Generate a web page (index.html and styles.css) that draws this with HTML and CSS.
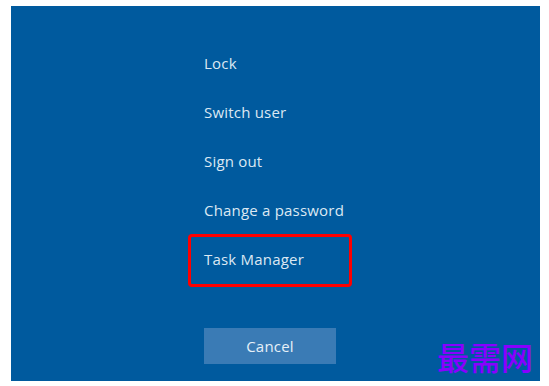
FILE: index.html
```html
<!DOCTYPE html>
<html>
<head>
<meta charset="utf-8">
<link rel="stylesheet" href="styles.css">
</head>
<body>
<div class="screen">
  <ul class="menu">
    <li class="item">Lock</li>
    <li class="item">Switch user</li>
    <li class="item">Sign out</li>
    <li class="item">Change a password</li>
    <li class="item highlighted">Task Manager</li>
  </ul>
  <button class="cancel">Cancel</button>
  <div class="watermark">最需网</div>
</div>
</body>
</html>
```
FILE: styles.css
```css
html, body {
  margin: 0;
  padding: 0;
  background: #ffffff;
}
body {
  padding: 6px 0 0 11px;
  height: 386px;
  box-sizing: border-box;
  overflow: hidden;
}
.screen {
  position: relative;
  width: 529px;
  height: 375px;
  background: #005a9e;
  box-sizing: border-box;
  padding: 33px 0 0 193px;
  font-family: "Open Sans", "Noto Sans", sans-serif;
  color: #dce8f3;
}
.menu {
  list-style: none;
  margin: 0;
  padding: 0;
  display: flex;
  flex-direction: column;
}
.item {
  position: relative;
  height: 49px;
  line-height: 49px;
  font-size: 15px;
  letter-spacing: 0.2px;
}
.highlighted::before {
  content: "";
  position: absolute;
  left: -16px;
  top: -1px;
  width: 158px;
  height: 47px;
  border: 3px solid #ff0000;
  border-radius: 4px;
}
.cancel {
  display: block;
  margin-top: 44px;
  width: 132px;
  height: 36px;
  border: none;
  padding: 0;
  background: #3a7bb5;
  color: #e6f0f8;
  font-family: "Open Sans", "Noto Sans", sans-serif;
  font-size: 15px;
  letter-spacing: 0.2px;
}
.watermark {
  position: absolute;
  left: 426px;
  top: 330px;
  font-family: "Noto Sans CJK SC", sans-serif;
  font-size: 32px;
  font-weight: 500;
  line-height: 40px;
  color: #8800ff;
}
```
